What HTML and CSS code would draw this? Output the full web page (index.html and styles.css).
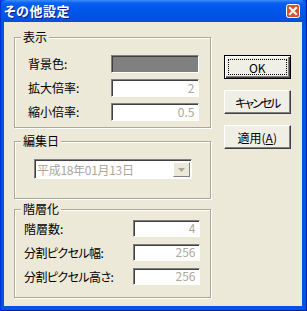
FILE: index.html
```html
<!DOCTYPE html>
<html lang="ja">
<head>
  <meta charset="UTF-8" />
  <title>その他設定</title>
  <link rel="stylesheet" href="styles.css">
</head>
<body>
  <div class="window">
    <div class="titlebar">
      <span class="title">その他設定</span>
      <span class="close">
        <svg width="14" height="14" viewBox="0 0 14 14">
          <rect x="0.5" y="0.5" width="13" height="13" rx="2" fill="#d9532c" stroke="#fff"/>
          <path d="M4 4 L10 10 M10 4 L4 10" stroke="#fff" stroke-width="2" stroke-linecap="square"/>
        </svg>
      </span>
    </div>

    <div class="client">
      <div class="groups">
        <fieldset class="group">
          <legend>表示</legend>
          <div class="rows rows-display">
            <div class="row"><span class="label">背景色:</span><span class="field color"></span></div>
            <div class="row"><span class="label">拡大倍率:</span><span class="field">2</span></div>
            <div class="row"><span class="label">縮小倍率:</span><span class="field">0.5</span></div>
          </div>
        </fieldset>

        <fieldset class="group group-date">
          <legend>編集日</legend>
          <div class="rows rows-date">
            <div class="combo">
              <span class="combo-text">平成18年01月13日</span>
              <span class="combo-btn">
                <svg width="7" height="4" viewBox="0 0 7 4"><path d="M0 0 H7 L3.5 4 Z" fill="#aca899"/></svg>
              </span>
            </div>
          </div>
        </fieldset>

        <fieldset class="group group-layer">
          <legend>階層化</legend>
          <div class="rows rows-layer">
            <div class="row"><span class="label">階層数:</span><span class="field small">4</span></div>
            <div class="row"><span class="label kana">分割ピクセル幅:</span><span class="field small">256</span></div>
            <div class="row"><span class="label kana">分割ピクセル高さ:</span><span class="field small">256</span></div>
          </div>
        </fieldset>
      </div>

      <div class="buttons">
        <button class="btn btn-default"><span class="focus">OK</span></button>
        <button class="btn btn-cancel">キャンセル</button>
        <button class="btn">適用(<u>A</u>)</button>
      </div>
    </div>
  </div>
</body>
</html>
```

FILE: styles.css
```css
:root {
  --frame: #0054e3;
  --face: #ece9d8;
  --etch: #aca899;
  --disabled: #aca899;
}

* {
  margin: 0;
  padding: 0;
  box-sizing: border-box;
}

body {
  background-color: var(--face);
  font-family: "Noto Sans CJK JP", "Noto Sans", sans-serif;
  font-size: 12px;
  font-feature-settings: "palt";
  color: #000;
}

.window {
  width: 307px;
  height: 311px;
  display: flex;
  flex-direction: column;
  background-color: var(--frame);
  padding: 0 4px 4px 3px;
  border-left: 1px solid #0831d9;
  border-right: 1px solid #001ea0;
  border-bottom: 1px solid #001ea0;
}

.titlebar {
  height: 22px;
  margin: 0 -4px 0 -3px;
  padding: 0 6px 0 3px;
  display: flex;
  align-items: center;
  justify-content: space-between;
  border-radius: 6px 6px 0 0;
  background: linear-gradient(#3d8bff 0, #0a62ee 3px, #0058ee 7px, #0055e5 14px, #0050dc 22px);
}

.title {
  color: #fff;
  font-weight: bold;
  font-size: 13px;
  line-height: 14px;
  letter-spacing: 0.5px;
  text-shadow: 1px 1px 0 #0a1e8c;
}

.close {
  display: flex;
}

.client {
  flex: 1;
  display: flex;
  gap: 13px;
  background-color: var(--face);
  padding: 8px 11px 0 10px;
}

.groups {
  width: 198px;
  display: flex;
  flex-direction: column;
}

.group {
  border: 1px solid var(--etch);
  box-shadow: 1px 1px 0 #fff, inset 1px 1px 0 #fff;
  min-width: 0;
}

.group legend {
  margin-left: 6px;
  padding: 0 2px;
  line-height: 14px;
  background-color: var(--face);
}

.group-date {
  margin-top: 6px;
}

.group-layer {
  margin-top: 3px;
}

.rows {
  display: flex;
  flex-direction: column;
}

.rows-display {
  padding: 11px 11px 6px 13px;
  gap: 6px;
}

.rows-date {
  padding: 11px 18px 19px 19px;
}

.rows-layer {
  padding: 4px 10px 12px 9px;
  gap: 7px;
}

.row {
  display: flex;
  align-items: center;
  justify-content: space-between;
}

.label {
  line-height: 14px;
}

.label.kana {
  letter-spacing: -0.6px;
}

.field {
  width: 88px;
  height: 18px;
  background-color: #fff;
  border: 1px solid;
  border-color: #808080 #fff #fff #808080;
  box-shadow: inset 1px 1px 0 #404040;
  color: var(--disabled);
  text-align: right;
  padding-right: 3px;
  line-height: 15px;
}

.field.color {
  background-color: #808080;
}

.field.small {
  width: 67px;
  height: 17px;
  line-height: 14px;
}

.combo {
  height: 20px;
  display: flex;
  background-color: #fff;
  border: 1px solid;
  border-color: #808080 #fff #fff #808080;
  box-shadow: inset 1px 1px 0 #404040;
  padding: 2px 1px 1px 2px;
}

.combo-text {
  flex: 1;
  color: var(--disabled);
  line-height: 15px;
  letter-spacing: -0.3px;
}

.combo-btn {
  width: 17px;
  display: flex;
  align-items: center;
  justify-content: center;
  background-color: var(--face);
  border: 1px solid;
  border-color: #fff #808080 #808080 #fff;
}

.buttons {
  width: 68px;
  display: flex;
  flex-direction: column;
  gap: 11px;
  padding-top: 25px;
}

.btn {
  height: 24px;
  font-family: inherit;
  font-size: 12px;
  font-feature-settings: "palt";
  color: #000;
  background-color: #f0efe6;
  border: 1px solid;
  border-color: #fff #404040 #404040 #fff;
  box-shadow: inset -1px -1px 0 #808080;
  display: flex;
  align-items: center;
  justify-content: center;
}

.btn-cancel {
  letter-spacing: -2px;
}

.btn-default {
  border: 1px solid #000;
  box-shadow: inset 1px 1px 0 #fff, inset -1px -1px 0 #404040, inset -2px -2px 0 #808080;
  padding: 3px;
}

.focus {
  flex: 1;
  align-self: stretch;
  border: 1px dotted #000;
  display: flex;
  align-items: center;
  justify-content: center;
}
```
